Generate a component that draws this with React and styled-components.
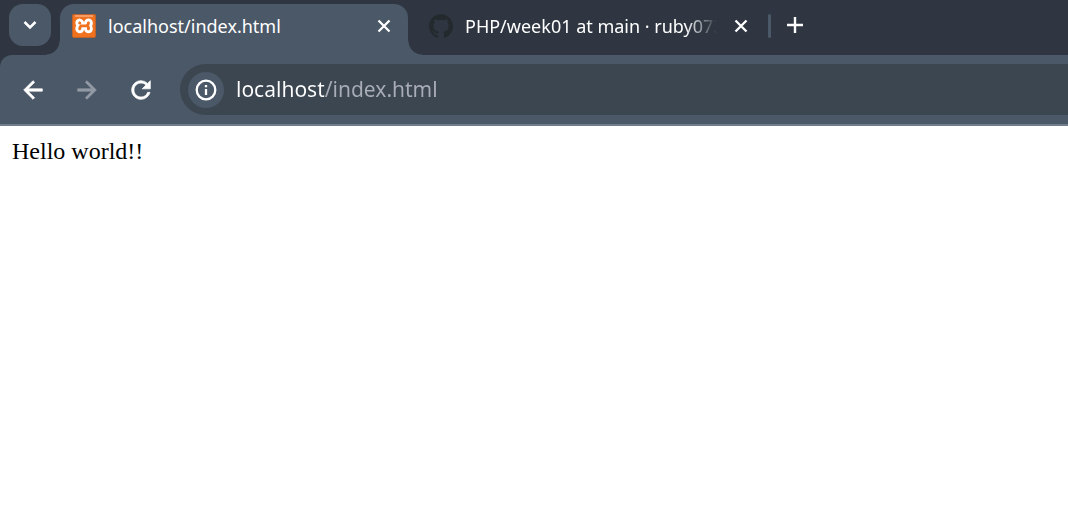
import React from "react";
import styled, { createGlobalStyle } from "styled-components";
import { SiXampp, SiGithub } from "react-icons/si";
import { MdArrowBack, MdArrowForward, MdRefresh } from "react-icons/md";

const frame = "#2f3641";
const surface = "#4b5868";

const GlobalStyle = createGlobalStyle`
  *, *::before, *::after { box-sizing: border-box; }
  body { margin: 0; background: #fff; }
  button { border: 0; padding: 0; background: none; color: inherit; }
  svg { display: block; }
`;

const Browser = styled.div`
  min-height: 100vh;
  overflow: hidden;
  color: #fff;
  font-family: "Noto Sans", "Open Sans", sans-serif;
`;

const TabStrip = styled.header`
  display: flex;
  height: 55px;
  padding: 4px 0 0 9px;
  background: ${frame};
`;

const IconButton = styled.button`
  display: flex;
  flex: none;
  align-items: center;
  justify-content: center;
  width: ${(p) => p.$size}px;
  height: ${(p) => p.$size}px;
  border-radius: ${(p) => p.$radius || "50%"};
  background: ${(p) => p.$fill || "transparent"};
  color: ${(p) => (p.disabled ? "#929aa5" : "#fff")};
`;

const Tab = styled.div`
  position: relative;
  display: flex;
  flex: 0 1 ${(p) => p.$width}px;
  align-items: center;
  min-width: 0;
  height: 51px;
  margin-left: ${(p) => (p.$active ? 9 : 0)}px;
  padding: 0 12px 8px ${(p) => (p.$active ? 12 : 21)}px;
  border-radius: 14px 14px 0 0;
  background: ${(p) => (p.$active ? surface : "transparent")};

  &::before,
  &::after {
    content: ${(p) => (p.$active ? '""' : "none")};
    position: absolute;
    bottom: 0;
    width: 14px;
    height: 14px;
  }
  &::before {
    right: 100%;
    background: radial-gradient(circle at 0 0, transparent 13px, ${surface} 14px);
  }
  &::after {
    left: 100%;
    z-index: 1;
    background: radial-gradient(circle at 100% 0, transparent 13px, ${surface} 14px);
  }
`;

const Favicon = styled.span`
  flex: none;
  width: 24px;
  height: 24px;
  color: #24292e;
`;

const TabTitle = styled.span`
  flex: 1;
  min-width: 0;
  margin: 0 12px;
  overflow: hidden;
  white-space: nowrap;
  font-size: 18px;
  line-height: 28px;
  mask-image: ${(p) =>
    p.$fade ? "linear-gradient(to right, #000 calc(100% - 32px), transparent)" : "none"};
`;

const Divider = styled.span`
  flex: none;
  width: 3px;
  height: 24px;
  margin: 10px 3px 0;
  border-radius: 2px;
  background: ${surface};
`;

const ToolbarBack = styled.div`
  background: ${frame};
`;

const Toolbar = styled.nav`
  display: flex;
  align-items: center;
  height: 71px;
  padding-left: 15px;
  border-bottom: 2px solid #717d8a;
  border-top-left-radius: 12px;
  background: ${surface};
`;

const NavButtons = styled.div`
  display: flex;
  gap: 18px;
  margin-right: 21px;

  path:last-child {
    stroke: currentColor;
    stroke-width: 0.6px;
  }
`;

const AddressBar = styled.form`
  display: flex;
  flex: 1;
  align-items: center;
  height: 51px;
  padding-left: 8px;
  border-radius: 26px 0 0 26px;
  background: #3c4651;
`;

/* The host is brighter than the path that follows it. */
const Address = styled.input`
  flex: 1;
  min-width: 0;
  height: 36px;
  margin-left: 12px;
  padding: 0 0 2px;
  border: 0;
  outline: 0;
  background: linear-gradient(to right, #fff 88px, #a9adb8 88px);
  background-clip: text;
  -webkit-background-clip: text;
  -webkit-text-fill-color: transparent;
  color: #fff;
  font: 21px/34px "Noto Sans", "Open Sans", sans-serif;
`;

const Page = styled.main`
  padding: 12px;
  color: #000;
  font: 24px/27px "Liberation Serif", "Times New Roman", serif;
`;

const Stroke = ({ d, size, width = 2 }) => (
  <svg width={size} height={size} viewBox={`0 0 ${size} ${size}`} fill="none" stroke="currentColor" strokeWidth={width}>
    <path d={d} />
  </svg>
);

const XamppIcon = () => (
  <svg width="24" height="24" viewBox="0 0 24 24">
    <rect x="2" y="2" width="20" height="20" fill="#fff" />
    <SiXampp size={24} color="#f0721f" />
    <rect x="0.5" y="0.5" width="23" height="23" rx="1.5" fill="none" stroke="#bd622b" />
    <path d="M3 2H21" stroke="#f9b184" strokeWidth="1.4" />
  </svg>
);

const CloseButton = () => (
  <IconButton type="button" aria-label="Close tab" $size={24}>
    <Stroke size={14} width={2.3} d="M1.5 1.5 12.5 12.5M12.5 1.5 1.5 12.5" />
  </IconButton>
);

export default function App() {
  return (
    <Browser>
      <GlobalStyle />
      <TabStrip>
        <IconButton type="button" aria-label="Search tabs" $size={42} $radius="14px" $fill={surface}>
          <Stroke size={16} width={2.5} d="M2.5 5 8 10.5 13.5 5" />
        </IconButton>
        <Tab $active $width={348}>
          <Favicon><XamppIcon /></Favicon>
          <TabTitle>localhost/index.html</TabTitle>
          <CloseButton />
        </Tab>
        <Tab $width={357}>
          <Favicon><SiGithub size={24} /></Favicon>
          <TabTitle $fade>PHP/week01 at main · ruby0733</TabTitle>
          <CloseButton />
        </Tab>
        <Divider />
        <IconButton type="button" aria-label="New tab" $size={42}>
          <Stroke size={16} width={2.4} d="M8 0V16M0 8H16" />
        </IconButton>
      </TabStrip>
      <ToolbarBack>
        <Toolbar>
          <NavButtons>
            <IconButton type="button" aria-label="Back" $size={36}><MdArrowBack size={28} /></IconButton>
            <IconButton type="button" aria-label="Forward" disabled $size={36}><MdArrowForward size={28} /></IconButton>
            <IconButton type="button" aria-label="Reload" $size={36}><MdRefresh size={28} /></IconButton>
          </NavButtons>
          <AddressBar>
            <IconButton type="button" aria-label="View site information" $size={36} $fill={surface}>
              <svg width="22" height="22" viewBox="0 0 22 22" fill="none" stroke="currentColor" strokeWidth="2.3">
                <circle cx="11" cy="11" r="9.3" />
                <path d="M11 10V16M11 6V8.3" />
              </svg>
            </IconButton>
            <Address aria-label="Address" defaultValue="localhost/index.html" />
          </AddressBar>
        </Toolbar>
      </ToolbarBack>
      <Page>Hello world!!</Page>
    </Browser>
  );
}
